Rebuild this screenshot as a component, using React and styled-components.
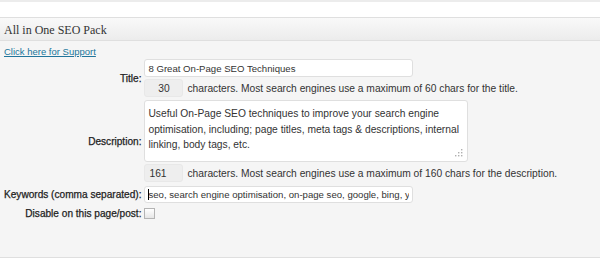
import React from 'react';
import styled, { createGlobalStyle } from 'styled-components';

const GlobalStyle = createGlobalStyle`
  html, body {
    margin: 0;
    padding: 0;
    background: #fff;
  }
  body {
    font-family: Arial, "Liberation Sans", sans-serif;
    color: #333;
  }
`;

const TopStrip = styled.div`
  height: 2px;
  background: #ececec;
  margin-bottom: 15px;
`;

const Panel = styled.div`
  border-top: 1px solid #dfdfdf;
  border-bottom: 1px solid #dfdfdf;
  background: #f5f5f5;
`;

const PanelHeader = styled.h3`
  margin: 0;
  height: 22px;
  padding: 0 4px;
  line-height: 24px;
  font-family: Georgia, "Liberation Serif", serif;
  font-size: 12px;
  font-weight: normal;
  color: #333;
  background: linear-gradient(to bottom, #f9f9f9, #ececec);
  border-bottom: 1px solid #dfdfdf;
`;

const PanelBody = styled.div`
  padding: 4px 4px 35px;
`;

const SupportLink = styled.a`
  display: block;
  width: max-content;
  font-size: 9.5px;
  line-height: 13px;
  color: #21759b;
  text-decoration: underline;
`;

const FormTable = styled.table`
  border-collapse: collapse;
  border-spacing: 0;
`;

const Label = styled.th`
  width: 137px;
  padding: 0 3px 0 0;
  text-align: right;
  vertical-align: middle;
  font-size: 10.1px;
  font-weight: normal;
  color: #222;
  -webkit-text-stroke: 0.25px #222;
  white-space: nowrap;
`;

const Field = styled.td`
  padding: ${p => p.$pad || '1px 0'};
  vertical-align: top;
`;

const TextInput = styled.input`
  display: block;
  box-sizing: border-box;
  width: 269px;
  height: ${p => p.$h || 18}px;
  margin: 0;
  padding: 0 3px;
  border: 1px solid #dfdfdf;
  border-radius: 3px;
  background: #fff;
  font-family: Arial, "Liberation Sans", sans-serif;
  font-size: 9.6px;
  color: #333;
  outline: none;
`;

const DescWrap = styled.div`
  position: relative;
  width: 324px;
`;

const DescBox = styled.textarea`
  display: block;
  box-sizing: border-box;
  width: 324px;
  height: 62px;
  margin: 0;
  padding: 5px 2px 5px 3px;
  border: 1px solid #dfdfdf;
  border-radius: 3px;
  background: #fff;
  font-family: Arial, "Liberation Sans", sans-serif;
  font-size: 10.25px;
  line-height: 15.5px;
  color: #333;
  outline: none;
  resize: none;
  overflow: hidden;
`;

const Grip = styled.svg`
  position: absolute;
  right: 5px;
  bottom: 5px;
`;

const CounterLine = styled.div`
  display: flex;
  align-items: center;
  gap: 4px;
  margin-top: 2px;
  font-size: 10.25px;
  color: #333;
  white-space: nowrap;
`;

const Counter = styled.input`
  box-sizing: border-box;
  width: 39px;
  height: 18px;
  margin: 0;
  padding: 0 4px;
  border: 1px solid #e8e8e8;
  border-radius: 3px;
  background: #eee;
  font-family: Arial, "Liberation Sans", sans-serif;
  font-size: 10.25px;
  color: #333;
  text-align: ${p => p.$align || 'center'};
  outline: none;
`;

const CaretWrap = styled.div`
  position: relative;
`;

const Caret = styled.span`
  position: absolute;
  left: 4px;
  top: 3px;
  width: 1px;
  height: 11px;
  background: #000;
`;

const Check = styled.span`
  display: block;
  box-sizing: border-box;
  width: 11px;
  height: 11px;
  border: 1px solid #b4b4b4;
  background: linear-gradient(to bottom, #fff, #e6e6e6);
`;

export default function App() {
  return (
    <>
      <GlobalStyle />
      <TopStrip />
      <Panel>
        <PanelHeader>All in One SEO Pack</PanelHeader>
        <PanelBody>
          <SupportLink href="#">Click here for Support</SupportLink>
          <FormTable>
            <tbody>
              <tr>
                <Label>Title:</Label>
                <Field>
                  <TextInput readOnly value="8 Great On-Page SEO Techniques" />
                  <CounterLine>
                    <Counter readOnly value="30" />
                    characters. Most search engines use a maximum of 60 chars for the title.
                  </CounterLine>
                </Field>
              </tr>
              <tr>
                <Label>Description:</Label>
                <Field $pad="2px 0">
                  <DescWrap>
                    <DescBox
                      readOnly
                      value="Useful On-Page SEO techniques to improve your search engine optimisation, including; page titles, meta tags & descriptions, internal linking, body tags, etc."
                    />
                    <Grip width="8" height="8" viewBox="0 0 8 8">
                      <g fill="#b0b0b0">
                        <rect x="6" y="0" width="1.4" height="1.4" />
                        <rect x="3" y="3" width="1.4" height="1.4" />
                        <rect x="6" y="3" width="1.4" height="1.4" />
                        <rect x="0" y="6" width="1.4" height="1.4" />
                        <rect x="3" y="6" width="1.4" height="1.4" />
                        <rect x="6" y="6" width="1.4" height="1.4" />
                      </g>
                    </Grip>
                  </DescWrap>
                  <CounterLine>
                    <Counter readOnly value="161" $align="left" />
                    characters. Most search engines use a maximum of 160 chars for the description.
                  </CounterLine>
                </Field>
              </tr>
              <tr>
                <Label>Keywords (comma separated):</Label>
                <Field $pad="2px 0">
                  <CaretWrap>
                    <TextInput
                      readOnly
                      $h={17}
                      value="seo, search engine optimisation, on-page seo, google, bing, yahoo"
                    />
                    <Caret />
                  </CaretWrap>
                </Field>
              </tr>
              <tr>
                <Label>Disable on this page/post:</Label>
                <Field $pad="3px 0">
                  <Check />
                </Field>
              </tr>
            </tbody>
          </FormTable>
        </PanelBody>
      </Panel>
    </>
  );
}
